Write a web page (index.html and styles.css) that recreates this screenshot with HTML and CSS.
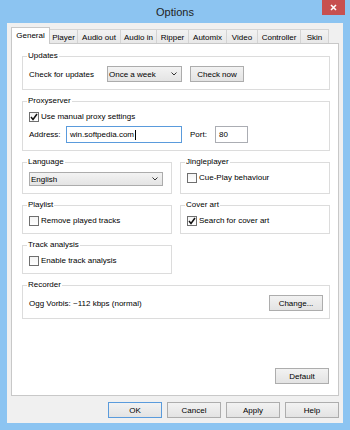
FILE: index.html
```html
<!DOCTYPE html>
<html>
<head>
<meta charset="utf-8">
<title>Options</title>
<link rel="stylesheet" href="styles.css">
</head>
<body>
<div class="window">
  <div class="titlebar">
    <span></span>
    <div class="title">Options</div>
    <div class="close">
      <svg width="7" height="7" viewBox="0 0 7 7"><path d="M1 1L6 6M6 1L1 6" stroke="#fff" stroke-width="1.6"/></svg>
    </div>
  </div>
  <div class="client">
    <div class="tabs">
      <div class="tab active">General</div>
      <div class="tab">Player</div>
      <div class="tab">Audio out</div>
      <div class="tab">Audio in</div>
      <div class="tab">Ripper</div>
      <div class="tab">Automix</div>
      <div class="tab">Video</div>
      <div class="tab">Controller</div>
      <div class="tab">Skin</div>
    </div>
    <div class="panel">
      <div class="grid">
        <fieldset class="box full updates">
          <legend>Updates</legend>
          <div class="row">
            <span class="lbl lbl-check">Check for updates</span>
            <div class="select sel-week"><span>Once a week</span><svg class="chev" width="6" height="4" viewBox="0 0 6 4"><path d="M0.5 0.5L3 3L5.5 0.5" fill="none" stroke="#333" stroke-width="1"/></svg></div>
            <button class="btn btn-check">Check now</button>
          </div>
        </fieldset>
        <fieldset class="box full proxy">
          <legend>Proxyserver</legend>
          <div class="check"><span class="cb"><svg width="8" height="8" viewBox="0 0 8 8"><path d="M1 4L3 6.5L7 1" fill="none" stroke="#111" stroke-width="1.5"/></svg></span><span>Use manual proxy settings</span></div>
          <div class="row addr-row">
            <span class="lbl lbl-addr">Address:</span>
            <div class="input input-addr focus">win.softpedia.com<span class="caret"></span></div>
            <span class="lbl lbl-port">Port:</span>
            <div class="input input-port">80</div>
          </div>
        </fieldset>
        <fieldset class="box lang">
          <legend>Language</legend>
          <div class="select sel-lang"><span>English</span><svg class="chev" width="6" height="4" viewBox="0 0 6 4"><path d="M0.5 0.5L3 3L5.5 0.5" fill="none" stroke="#333" stroke-width="1"/></svg></div>
        </fieldset>
        <fieldset class="box cbox">
          <legend>Jingleplayer</legend>
          <div class="check"><span class="cb"></span><span>Cue-Play behaviour</span></div>
        </fieldset>
        <fieldset class="box cbox">
          <legend>Playlist</legend>
          <div class="check"><span class="cb"></span><span>Remove played tracks</span></div>
        </fieldset>
        <fieldset class="box cbox">
          <legend>Cover art</legend>
          <div class="check"><span class="cb"><svg width="8" height="8" viewBox="0 0 8 8"><path d="M1 4L3 6.5L7 1" fill="none" stroke="#111" stroke-width="1.5"/></svg></span><span>Search for cover art</span></div>
        </fieldset>
        <fieldset class="box cbox">
          <legend>Track analysis</legend>
          <div class="check"><span class="cb"></span><span>Enable track analysis</span></div>
        </fieldset>
        <fieldset class="box full recorder">
          <legend>Recorder</legend>
          <div class="row rec-row">
            <span>Ogg Vorbis: ~112 kbps (normal)</span>
            <button class="btn">Change...</button>
          </div>
        </fieldset>
      </div>
      <div class="panel-foot">
        <button class="btn">Default</button>
      </div>
    </div>
    <div class="footer">
      <button class="btn btn-default">OK</button>
      <button class="btn">Cancel</button>
      <button class="btn">Apply</button>
      <button class="btn">Help</button>
    </div>
  </div>
</div>
</body>
</html>
```
FILE: styles.css
```css
* { box-sizing: border-box; }
html, body { margin: 0; padding: 0; }
body {
  font-family: "Liberation Sans", Arial, sans-serif;
  font-size: 8px;
  color: #000;
  background: #8cc4f1;
}
.window {
  width: 350px;
  height: 430px;
  background: #8cc4f1;
  display: flex;
  flex-direction: column;
}
.titlebar {
  height: 23px;
  flex: none;
  display: grid;
  grid-template-columns: 1fr auto 1fr;
  align-items: center;
}
.title {
  font-size: 11px;
  color: #222;
  padding-top: 1px;
}
.close {
  justify-self: end;
  align-self: start;
  width: 23px;
  height: 15px;
  margin-right: 5px;
  background: #c75050;
  display: flex;
  align-items: center;
  justify-content: center;
}
.close svg { display: block; }
.client {
  margin: 0 7px 7px;
  flex: 1;
  background: #f0f0f0;
  border: 1px solid #7fb0dc;
  border-width: 0;
  padding: 4px 4px 5px;
  display: flex;
  flex-direction: column;
}
.tabs {
  display: flex;
  align-items: flex-end;
  height: 16px;
  flex: none;
}
.tab {
  height: 14px;
  border: 1px solid #d4d4d4;
  border-bottom: none;
  background: linear-gradient(#f2f2f2, #e8e8e8);
  margin-left: -1px;
  display: flex;
  align-items: center;
  justify-content: center;
  white-space: nowrap;
  padding-top: 1px;
}
.tab.active {
  height: 17px;
  margin-bottom: -1px;
  margin-left: 0;
  background: #fff;
  border-color: #c8c8c8;
  position: relative;
  z-index: 1;
  padding-top: 0;
  padding-bottom: 2px;
}
.tab:nth-child(1) { width: 39px; }
.tab:nth-child(2) { width: 29px; }
.tab:nth-child(3) { width: 44px; }
.tab:nth-child(4) { width: 37px; }
.tab:nth-child(5) { width: 33px; }
.tab:nth-child(6) { width: 39px; }
.tab:nth-child(7) { width: 32px; }
.tab:nth-child(8) { width: 44px; }
.tab:nth-child(9) { width: 29px; }

.panel {
  height: 353px;
  flex: none;
  background: #fff;
  border: 1px solid #c8c8c8;
  padding: 7px 8px 11px 10px;
  display: flex;
  flex-direction: column;
}
.grid {
  display: grid;
  grid-template-columns: 150px 150px;
  column-gap: 8px;
  row-gap: 6px;
}
.full { grid-column: 1 / -1; }
fieldset.box {
  margin: 0;
  min-width: 0;
  border: 1px solid #dcdcdc;
  padding: 5px 6px 7px;
}
legend {
  padding: 0 1px;
  margin-left: -2px;
  line-height: 10px;
  height: 10px;
}
.row {
  display: flex;
  align-items: center;
}
.updates .row { height: 16px; }
.lbl-check { width: 78px; }
.select {
  height: 16px;
  border: 1px solid #acacac;
  background: linear-gradient(#f3f3f3, #e4e4e4);
  display: flex;
  align-items: center;
  justify-content: space-between;
  padding: 0 4px 0 1px;
}
.chev { display: block; }
.sel-week { width: 75px; margin-right: 8px; }
.btn {
  width: 54px;
  height: 16px;
  border: 1px solid #adadad;
  background: linear-gradient(#f2f2f2, #e3e3e3);
  font: inherit;
  color: #000;
  padding: 0;
  margin: 0;
  flex: none;
}
.btn-default { border-color: #5a9bdc; }

.proxy { padding: 4px 6px 6px; }
.check {
  display: flex;
  align-items: center;
  gap: 2px;
  height: 11px;
}
.cb {
  width: 10px;
  height: 10px;
  border: 1px solid #6f6f6f;
  background: linear-gradient(#f4f4f4, #fff);
  display: flex;
  align-items: center;
  justify-content: center;
  flex: none;
}
.cb svg { display: block; }
.addr-row { margin-top: 4px; height: 17px; }
.lbl-addr { width: 37px; flex: none; }
.input {
  height: 17px;
  border: 1px solid #abadb3;
  background: #fff;
  display: flex;
  align-items: center;
  padding: 0 3px;
  flex: none;
}
.input.focus { border-color: #5a9bdc; }
.input-addr { width: 116px; margin-right: 8px; }
.caret {
  display: inline-block;
  width: 1px;
  height: 10px;
  background: #000;
  margin-left: 1px;
}
.lbl-port { width: 25px; flex: none; }
.input-port { width: 33px; }

.lang { padding: 5px 6px 5px; }
.sel-lang { width: 134px; height: 14px; }
.cbox { padding: 5px 6px 6px; }
.recorder { padding: 2px 8px 7px 7px; }
.rec-row { justify-content: space-between; height: 16px; }

.panel-foot {
  margin-top: auto;
  display: flex;
  justify-content: flex-end;
  padding-right: 1px;
}
.footer {
  margin-top: 6px;
  display: flex;
  justify-content: flex-end;
  gap: 5px;
}
```
